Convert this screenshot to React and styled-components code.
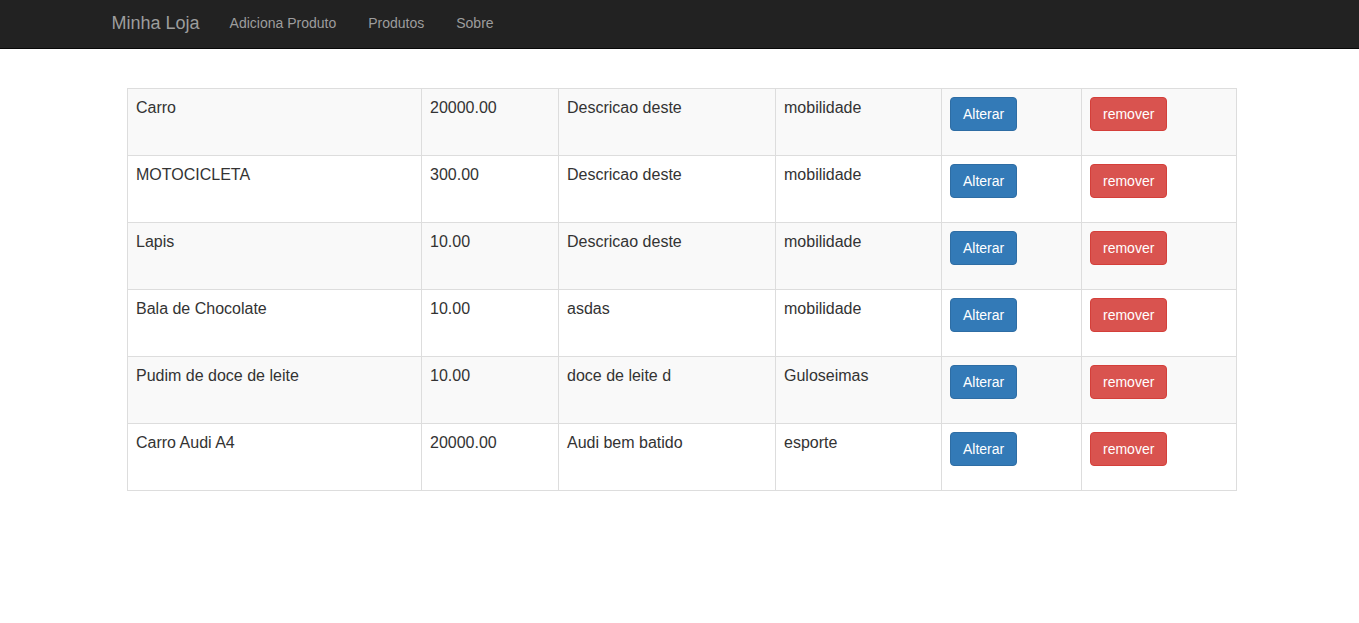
import React from "react";
import styled, { createGlobalStyle } from "styled-components";

const GlobalStyle = createGlobalStyle`
  * { box-sizing: border-box; }
  body {
    margin: 0;
    background: #fff;
    color: #333;
    font-family: "Liberation Sans", Arial, Helvetica, sans-serif;
    font-size: 14px;
    line-height: 1.42857143;
  }
`;

const Navbar = styled.nav`
  height: 49px;
  background-color: #222;
  border-bottom: 1px solid #080808;
`;

const NavContainer = styled.div`
  width: 1170px;
  margin: 0 auto;
  padding: 0 15px 2px;
  height: 100%;
  display: flex;
  align-items: center;
`;

const Brand = styled.a`
  font-size: 18px;
  line-height: 20px;
  color: #9d9d9d;
  text-decoration: none;
  padding-right: 14px;
  margin-left: 2px;
`;

const NavLink = styled.a`
  font-size: 14px;
  line-height: 20px;
  color: #9d9d9d;
  text-decoration: none;
  padding: 0 16px;
  margin-top: -1px;
`;

const Main = styled.main`
  width: 1110px;
  margin: 39px 0 0 calc(50% - 552.5px);
`;

const Table = styled.table`
  width: 1109px;
  table-layout: fixed;
  border-collapse: collapse;
  border: 1px solid #ddd;
`;

const Row = styled.tr`
  background-color: ${(props) => (props.striped ? "#f9f9f9" : "#fff")};
`;

const Cell = styled.td`
  border: 1px solid #ddd;
  padding: 8px;
  height: 67px;
  vertical-align: top;
  font-size: 16px;
  line-height: 1.42857143;
  color: #333;
  white-space: nowrap;
  overflow: hidden;
`;

const Button = styled.button`
  display: inline-block;
  font-family: inherit;
  font-size: 14px;
  line-height: 20px;
  padding: 6px 12px;
  border-radius: 4px;
  border: 1px solid ${(props) => (props.danger ? "#d43f3a" : "#2e6da4")};
  background-color: ${(props) => (props.danger ? "#d9534f" : "#337ab7")};
  color: #fff;
  cursor: pointer;
`;

const products = [
  { nome: "Carro", preco: "20000.00", descricao: "Descricao deste", categoria: "mobilidade" },
  { nome: "MOTOCICLETA", preco: "300.00", descricao: "Descricao deste", categoria: "mobilidade" },
  { nome: "Lapis", preco: "10.00", descricao: "Descricao deste", categoria: "mobilidade" },
  { nome: "Bala de Chocolate", preco: "10.00", descricao: "asdas", categoria: "mobilidade" },
  { nome: "Pudim de doce de leite", preco: "10.00", descricao: "doce de leite d", categoria: "Guloseimas" },
  { nome: "Carro Audi A4", preco: "20000.00", descricao: "Audi bem batido", categoria: "esporte" },
];

const colWidths = [294, 137, 217, 166, 140, 155];

export default function App() {
  return (
    <>
      <GlobalStyle />
      <Navbar>
        <NavContainer>
          <Brand href="#">Minha Loja</Brand>
          <NavLink href="#">Adiciona Produto</NavLink>
          <NavLink href="#">Produtos</NavLink>
          <NavLink href="#">Sobre</NavLink>
        </NavContainer>
      </Navbar>
      <Main>
        <Table>
          <colgroup>
            {colWidths.map((w, i) => (
              <col key={i} style={{ width: w }} />
            ))}
          </colgroup>
          <tbody>
            {products.map((p, idx) => (
              <Row key={idx} striped={idx % 2 === 0}>
                <Cell>{p.nome}</Cell>
                <Cell>{p.preco}</Cell>
                <Cell>{p.descricao}</Cell>
                <Cell>{p.categoria}</Cell>
                <Cell>
                  <Button>Alterar</Button>
                </Cell>
                <Cell>
                  <Button danger>remover</Button>
                </Cell>
              </Row>
            ))}
          </tbody>
        </Table>
      </Main>
    </>
  );
}
